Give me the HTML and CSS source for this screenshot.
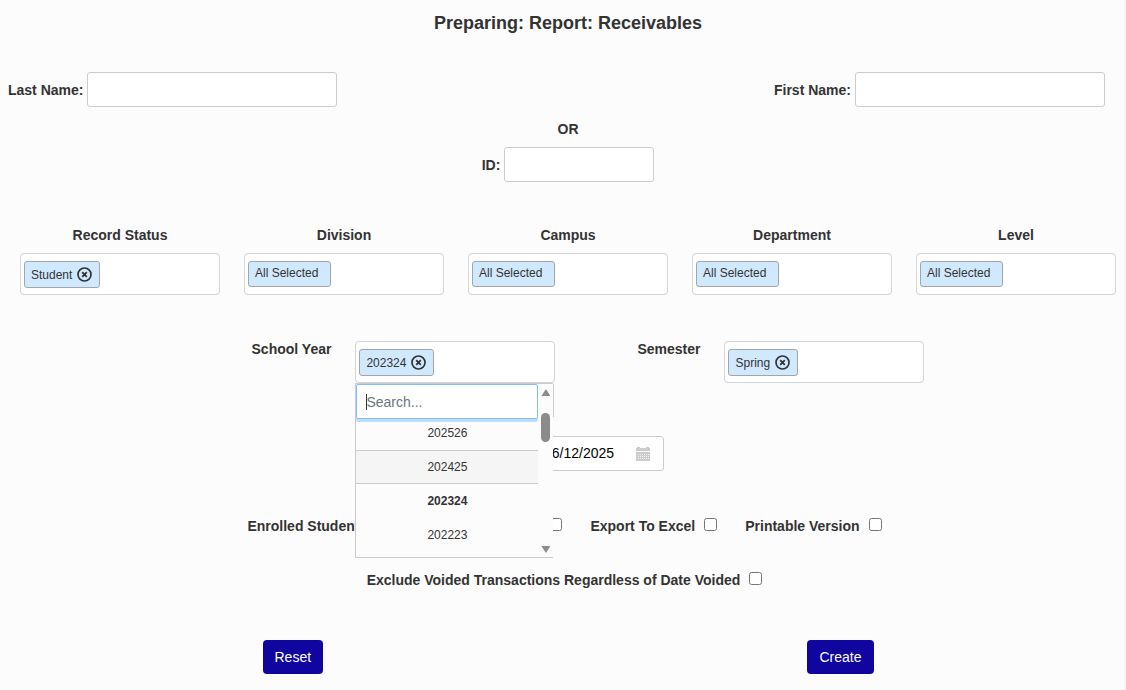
FILE: index.html
```html
<!DOCTYPE html>
<html lang="en">
<head>
    <meta charset="UTF-8">
    <meta name="viewport" content="width=device-width, initial-scale=1.0">
    <title>Report: Receivables</title>
    <link rel="stylesheet" href="styles.css">
</head>
<body>

    <!-- Shared icons -->
    <svg class="icon-defs" aria-hidden="true">
        <symbol id="icon-remove" viewBox="0 0 15 15">
            <circle cx="7.5" cy="7.5" r="6.5" fill="none" stroke="currentColor" stroke-width="1.7"/>
            <path d="M5.2 5.2l4.6 4.6M9.8 5.2l-4.6 4.6" stroke="currentColor" stroke-width="1.8"/>
        </symbol>
    </svg>

    <form class="report-form">
        <h1 class="title">Preparing: Report: Receivables</h1>

        <div class="name-row">
            <div class="field">
                <label for="last-name">Last Name:</label>
                <input type="text" id="last-name" class="text-input name-input">
            </div>
            <div class="field">
                <label for="first-name">First Name:</label>
                <input type="text" id="first-name" class="text-input name-input">
            </div>
        </div>

        <p class="or">OR</p>
        <div class="field id-field">
            <label for="person-id">ID:</label>
            <input type="text" id="person-id" class="text-input short-input">
        </div>

        <!-- Filters -->
        <div class="filters">
            <div class="filter" role="group" aria-labelledby="status-label">
                <span class="label" id="status-label">Record Status</span>
                <div class="picker">
                    <span class="chip">Student
                        <button type="button" class="chip-remove" aria-label="Remove Student"><svg><use href="#icon-remove"/></svg></button>
                    </span>
                </div>
            </div>
            <div class="filter" role="group" aria-labelledby="division-label">
                <span class="label" id="division-label">Division</span>
                <div class="picker"><span class="chip chip-all">All Selected</span></div>
            </div>
            <div class="filter" role="group" aria-labelledby="campus-label">
                <span class="label" id="campus-label">Campus</span>
                <div class="picker"><span class="chip chip-all">All Selected</span></div>
            </div>
            <div class="filter" role="group" aria-labelledby="department-label">
                <span class="label" id="department-label">Department</span>
                <div class="picker"><span class="chip chip-all">All Selected</span></div>
            </div>
            <div class="filter" role="group" aria-labelledby="level-label">
                <span class="label" id="level-label">Level</span>
                <div class="picker"><span class="chip chip-all">All Selected</span></div>
            </div>
        </div>

        <!-- School year and semester -->
        <div class="terms">
            <div class="term" role="group" aria-labelledby="year-label">
                <span class="label" id="year-label">School Year</span>
                <div class="picker">
                    <span class="chip">202324
                        <button type="button" class="chip-remove" aria-label="Remove 202324"><svg><use href="#icon-remove"/></svg></button>
                    </span>
                    <div class="menu">
                        <div class="menu-body">
                            <div class="search">
                                <input type="text" class="search-input" placeholder="Search..." aria-label="Search school years">
                            </div>
                            <ul class="options" role="listbox" aria-labelledby="year-label">
                                <li class="option" role="option">202526</li>
                                <li class="option active" role="option">202425</li>
                                <li class="option selected" role="option" aria-selected="true">202324</li>
                                <li class="option" role="option">202223</li>
                            </ul>
                        </div>
                        <div class="scrollbar">
                            <span class="arrow-up"></span>
                            <span class="thumb"></span>
                            <span class="arrow-down"></span>
                        </div>
                    </div>
                </div>
            </div>
            <div class="term" role="group" aria-labelledby="semester-label">
                <span class="label" id="semester-label">Semester</span>
                <div class="picker">
                    <span class="chip">Spring
                        <button type="button" class="chip-remove" aria-label="Remove Spring"><svg><use href="#icon-remove"/></svg></button>
                    </span>
                </div>
            </div>
        </div>

        <div class="date-row">
            <div class="date-box">
                <input type="text" class="text-input short-input date-input" value="06/12/2025" aria-label="Report date">
                <svg class="calendar" viewBox="0 0 14 14" aria-hidden="true">
                    <path fill="#ccc" d="M0 1h1V0h3v1h6V0h3v1h1v3H0zM0 5h14v9H0z"/>
                    <path stroke="#fff" stroke-opacity=".7" stroke-dasharray="1 1" d="M2 7.5h11M2 9.5h11M2 11.5h11"/>
                </svg>
            </div>
        </div>

        <!-- Options -->
        <div class="checks">
            <label class="check"><span class="enrolled">Enrolled Students</span><input type="checkbox"></label>
            <label class="check"><span>Export To Excel</span><input type="checkbox"></label>
            <label class="check"><span>Printable Version</span><input type="checkbox"></label>
        </div>
        <div class="checks">
            <label class="check"><span>Exclude Voided Transactions Regardless of Date Voided</span><input type="checkbox"></label>
        </div>

        <div class="actions">
            <button type="reset" class="btn">Reset</button>
            <button type="submit" class="btn">Create</button>
        </div>
    </form>

</body>
</html>
```
FILE: styles.css
```css
* {
    box-sizing: border-box;
}

body {
    margin: 0;
    min-height: 100vh;
    background-color: #fcfcfc;
    border-right: 2px solid #f5f5f5;
    color: #333;
    font-family: Arial, "Liberation Sans", sans-serif;
    font-size: 14px;
    line-height: 20px;
    overflow-x: hidden;
}

input,
button {
    font-family: inherit;
    font-size: 14px;
}

label,
.label,
.or {
    font-weight: bold;
}

.icon-defs {
    display: none;
}

.report-form {
    margin: 0 -4px 0 8px;
    padding-top: 13px;
}

.title {
    margin: 0 0 39px;
    font-size: 18px;
    line-height: 20px;
    text-align: center;
}

.name-row {
    display: flex;
    justify-content: space-between;
    padding-right: 23px;
}

.field {
    display: flex;
    align-items: center;
    gap: 4px;
}

.text-input {
    height: 35px;
    padding: 6px 8px;
    background-color: #fff;
    border: 1px solid #ccc;
    border-radius: 3px;
}

.name-input {
    width: 250px;
}

.short-input {
    width: 150px;
}

.or {
    margin: 12px 0 8px;
    text-align: center;
}

.id-field {
    justify-content: center;
}

/* Filters */
.filters {
    display: grid;
    grid-template-columns: repeat(5, 1fr);
    margin-top: 43px;
}

.filter {
    display: flex;
    flex-direction: column;
    align-items: center;
    gap: 8px;
}

.picker {
    position: relative;
    width: 200px;
    height: 42px;
    padding: 7px 3px;
    background-color: #fff;
    border: 1px solid #ced4da;
    border-radius: 4px;
}

.chip {
    display: flex;
    align-items: center;
    gap: 5px;
    width: fit-content;
    height: 27px;
    padding: 0 7px 0 6px;
    background-color: #d1e9ff;
    border: 1px solid #a5a5a5;
    border-radius: 3px;
    font-size: 12px;
}

.chip-all {
    height: 26px;
    padding-right: 12px;
    padding-bottom: 2px;
}

.chip-remove {
    display: flex;
    padding: 0;
    background: none;
    border: none;
    color: #333;
    cursor: pointer;
}

.chip-remove svg {
    width: 15px;
    height: 15px;
}

/* School year and semester */
.terms {
    display: flex;
    justify-content: center;
    gap: 82px;
    margin-top: 46px;
    padding-left: 40px;
}

.term {
    display: flex;
    gap: 24px;
}

.term .label {
    line-height: 16px;
}

/* Open school year list */
.menu {
    position: absolute;
    top: calc(100% + 1px);
    left: -1px;
    z-index: 2;
    display: flex;
    width: 198px;
    height: 175px;
    background-color: #fcfcfc;
    border: 1px solid #ccc;
    border-right: none;
}

.menu::after {
    content: "";
    position: absolute;
    top: 0;
    left: 100%;
    width: 1px;
    height: 33px;
    background-color: #ccc;
}

.menu-body {
    flex: 1;
    overflow: hidden;
}

.search {
    position: relative;
    height: 35px;
    border-radius: 2px;
    box-shadow: 0 3px 0 #bfdeff;
}

/* text cursor */
.search::after {
    content: "";
    position: absolute;
    top: 10px;
    left: 10px;
    width: 1px;
    height: 16px;
    background-color: #333;
}

.search-input {
    display: block;
    width: 100%;
    height: 35px;
    padding: 0 9px;
    background-color: #fff;
    border: 1px solid #80bdff;
    border-radius: 2px;
    outline: none;
}

.search-input::placeholder {
    color: #6c757d;
}

.options {
    margin: -3px 0 0;
    padding: 0;
    list-style: none;
}

.option {
    height: 34px;
    border: solid transparent;
    border-width: 1px 0;
    font-size: 12px;
    line-height: 32px;
    text-align: center;
    cursor: pointer;
}

.option.active {
    background-color: #f5f5f5;
    border-color: #ccc;
}

.option.selected {
    font-weight: bold;
}

.scrollbar {
    display: flex;
    flex-direction: column;
    align-items: center;
    width: 15px;
    padding: 5px 0 4px;
}

.arrow-up,
.arrow-down {
    width: 9px;
    height: 7px;
    background-color: #8b8b8b;
    clip-path: polygon(50% 0, 100% 100%, 0 100%);
}

.arrow-down {
    margin-top: auto;
    clip-path: polygon(0 0, 100% 0, 50% 100%);
}

.thumb {
    width: 9px;
    height: 29px;
    margin-top: 17px;
    background-color: #8b8b8b;
    border-radius: 5px;
}

/* Date */
.date-row {
    display: flex;
    justify-content: center;
    margin-top: 53px;
    padding-left: 42px;
}

.date-box {
    position: relative;
}

.date-input {
    display: block;
    padding-bottom: 8px;
    padding-left: 29px;
    color: #000;
}

.calendar {
    position: absolute;
    top: 11px;
    right: 14px;
    width: 14px;
    height: 14px;
}

/* Check boxes */
.checks {
    display: flex;
    justify-content: center;
    gap: 28px;
    margin-top: 34px;
    padding-right: 7px;
}

.date-row + .checks {
    margin-top: 45px;
}

.check {
    display: flex;
    gap: 9px;
}

.check input {
    width: 13px;
    height: 13px;
    margin: 2px 0 0;
}

.enrolled {
    width: 293px;
}

/* Buttons */
.actions {
    display: flex;
    justify-content: space-between;
    max-width: 611px;
    margin: 50px auto 0;
}

.btn {
    height: 34px;
    padding: 0 12px;
    background-color: #10069f;
    border: none;
    border-radius: 4px;
    color: #fff;
    cursor: pointer;
}
```
